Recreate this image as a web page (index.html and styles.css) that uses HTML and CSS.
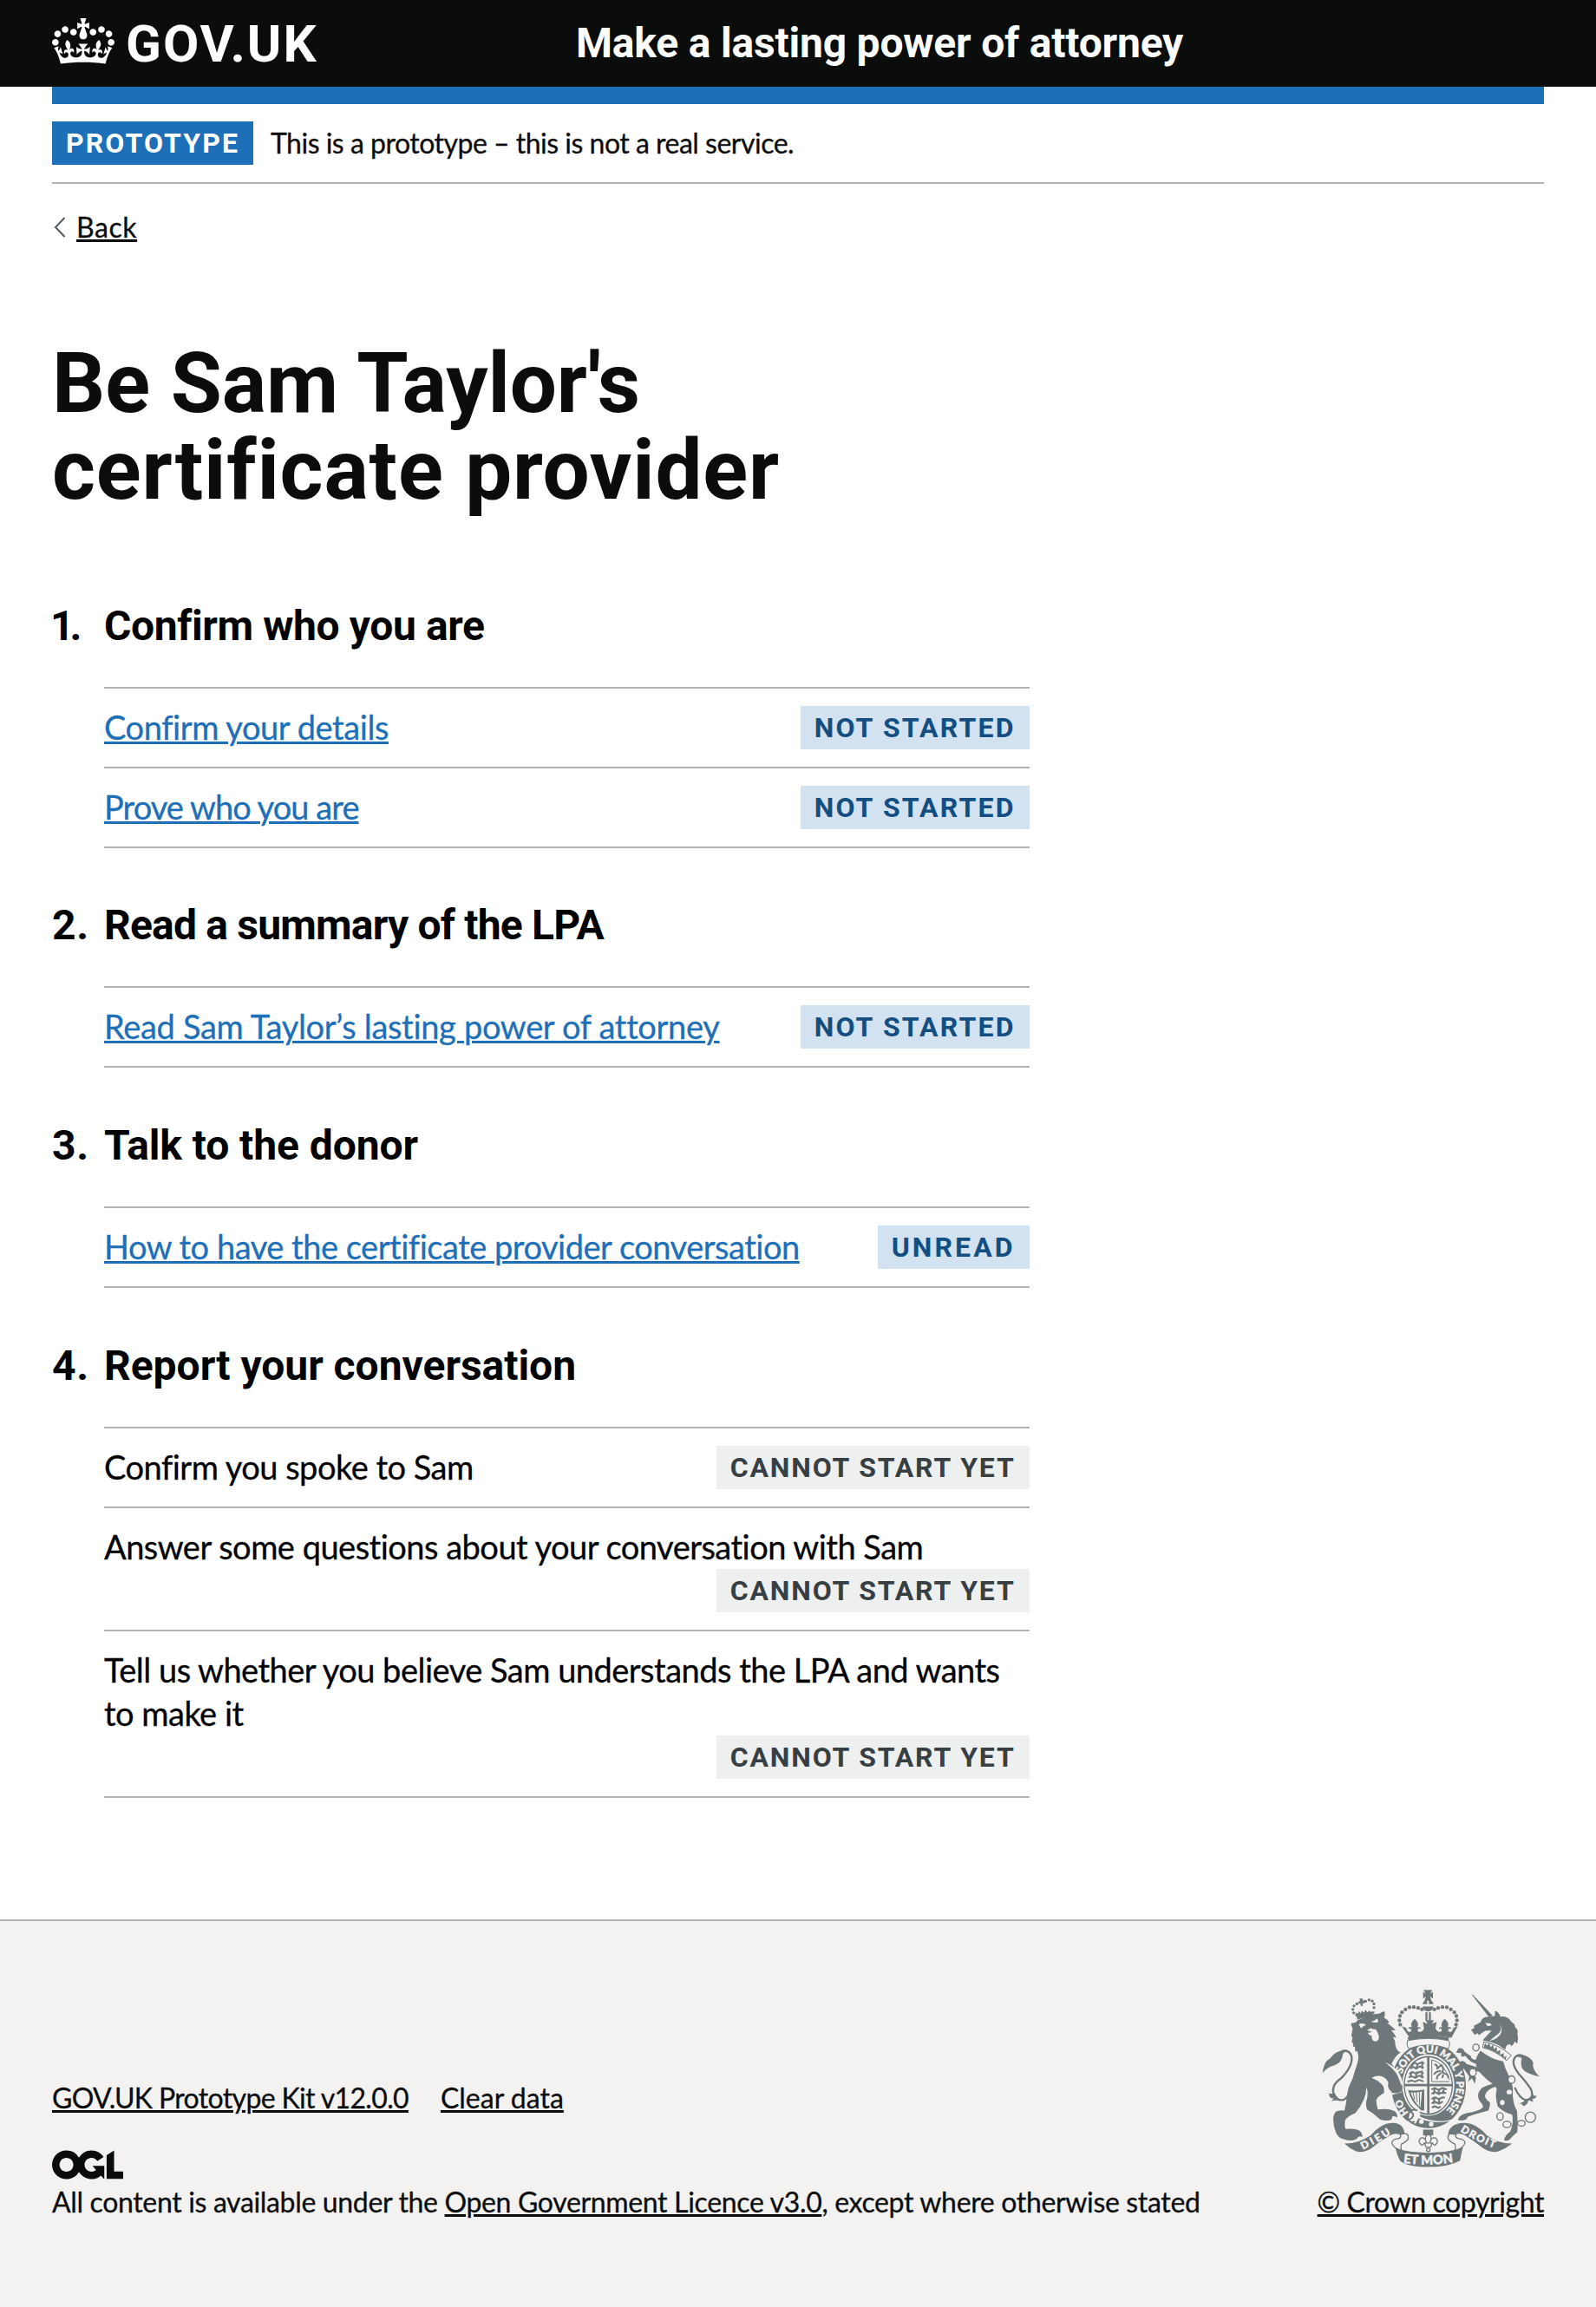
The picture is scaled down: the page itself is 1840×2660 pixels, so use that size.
FILE: index.html
```html
<!DOCTYPE html>
<html lang="en">
<head>
<meta charset="utf-8">
<title>Be Sam Taylor's certificate provider – Make a lasting power of attorney</title>
<link rel="stylesheet" href="styles.css">
</head>
<body>
<header class="header">
  <a class="logo" href="#">
    <svg class="logo-crown" viewBox="0 0 132 97" aria-hidden="true"><path fill="currentColor" fill-rule="evenodd" d="M25 30.2c3.5 1.5 7.7-.2 9.1-3.7 1.5-3.6-.2-7.8-3.9-9.2-3.6-1.4-7.6.3-9.1 3.9-1.4 3.5.3 7.5 3.9 9zM9 39.5c3.6 1.5 7.8-.2 9.2-3.7 1.5-3.6-.2-7.8-3.9-9.1-3.6-1.5-7.6.2-9.1 3.8-1.4 3.5.3 7.5 3.8 9zM4.4 57.2c3.5 1.5 7.7-.2 9.1-3.8 1.5-3.6-.2-7.7-3.9-9.1-3.5-1.5-7.6.3-9.1 3.8-1.4 3.5.3 7.6 3.9 9.1zm38.3-21.4c3.5 1.5 7.7-.2 9.1-3.8 1.5-3.6-.2-7.7-3.9-9.1-3.6-1.5-7.6.3-9.1 3.8-1.3 3.6.4 7.7 3.9 9.1zm64.4-5.6c-3.6 1.5-7.8-.2-9.1-3.7-1.5-3.6.2-7.8 3.8-9.2 3.6-1.4 7.7.3 9.2 3.9 1.3 3.5-.4 7.5-3.9 9zm15.9 9.3c-3.6 1.5-7.7-.2-9.1-3.7-1.5-3.6.2-7.8 3.7-9.1 3.6-1.5 7.7.2 9.2 3.8 1.5 3.5-.3 7.5-3.8 9zm4.7 17.7c-3.6 1.5-7.8-.2-9.2-3.8-1.5-3.6.2-7.7 3.9-9.1 3.6-1.5 7.7.3 9.2 3.8 1.3 3.5-.4 7.6-3.9 9.1zM89.3 35.8c-3.6 1.5-7.8-.2-9.2-3.8-1.4-3.6.2-7.7 3.9-9.1 3.6-1.5 7.7.3 9.2 3.8 1.4 3.6-.3 7.7-3.9 9.1zM69.7 17.7l8.9 4.7V9.3l-8.9 2.8c-.2-.3-.5-.6-.9-.9L72.4 0H59.6l3.5 11.2c-.3.3-.6.5-.9.9l-8.8-2.8v13.1l8.8-4.7c.3.3.6.7.9.9l-5 15.4v.1c-.2.8-.4 1.6-.4 2.4 0 4.1 3.1 7.5 7 8.1h.2c.3 0 .7.1 1 .1.4 0 .7 0 1-.1h.2c4-.6 7.1-4.1 7.1-8.1 0-.8-.1-1.7-.4-2.4V34l-5.1-15.4c.4-.2.7-.6 1-.9zM66 92.8c16.9 0 32.8 1.1 47.1 3.2 4-16.9 8.9-26.7 14-33.5l-9.6-3.4c1 4.9 1.1 7.2 0 10.2-1.5-1.4-3-4.3-4.2-8.7L108.6 76c2.8-2 5-3.2 7.5-3.3-4.4 9.4-10 11.9-13.6 11.2-4.3-.8-6.3-4.6-5.6-7.9 1-4.7 5.7-5.9 8-.5 4.3-8.7-3-11.4-7.6-8.8 7.1-7.2 7.9-13.5 2.1-21.1-8 6.1-8.1 12.3-4.5 20.8-4.7-5.4-12.1-2.5-9.5 6.2 3.4-5.2 7.9-2 7.2 3.1-.6 4.3-6.4 7.8-13.5 7.2-10.3-.9-10.9-8-11.2-13.8 2.5-.5 7.1 1.8 11 7.3L80.2 60c-4.1 4.4-8 5.3-12.3 5.4 1.4-4.4 8-11.6 8-11.6H55.5s6.4 7.2 7.9 11.6c-4.2-.1-8-1-12.3-5.4l1.4 16.4c3.9-5.5 8.5-7.7 10.9-7.3-.3 5.8-.9 12.8-11.1 13.8-7.2.6-12.9-2.9-13.5-7.2-.7-5 3.8-8.3 7.1-3.1 2.7-8.7-4.6-11.6-9.4-6.2 3.7-8.5 3.6-14.7-4.6-20.8-5.8 7.6-5 13.9 2.2 21.1-4.7-2.6-11.9.1-7.7 8.8 2.3-5.5 7.1-4.2 8.1.5.7 3.3-1.3 7.1-5.7 7.9-3.5.7-9-1.8-13.5-11.2 2.5.1 4.7 1.3 7.5 3.3l-4.7-15.4c-1.2 4.4-2.7 7.2-4.3 8.7-1.1-3-.9-5.3 0-10.2l-9.5 3.4c5 6.9 9.9 16.7 14 33.5 14.8-2.1 30.8-3.2 47.7-3.2z"/></svg>
    <span class="logo-text">GOV.UK</span>
  </a>
  <a class="service-name" href="#">Make a lasting power of attorney</a>
</header>

<div class="container">
  <div class="blue-bar"></div>
  <div class="phase-banner">
    <strong class="tag tag-phase">PROTOTYPE</strong>
    <span class="phase-text">This is a prototype – this is not a real service.</span>
  </div>
  <a class="back-link" href="#"><svg class="back-arrow" viewBox="0 0 14 24" aria-hidden="true"><path d="M12.500 1 2 12 12.500 23" fill="none" stroke="#505a5f" stroke-width="2"/></svg><span class="back-text">Back</span></a>

  <main class="main">
    <h1 class="title"><span class="title-first">Be Sam Taylor's</span> <span class="title-second">certificate provider</span></h1>
    <ol class="task-list">
      <li class="section">
        <h2 class="section-title s1"><span class="number number-one">1.</span>Confirm who you are</h2>
        <ul class="tasks">
          <li class="task"><a class="task-name n1" href="#">Confirm your details</a><strong class="tag tag-todo">NOT STARTED</strong></li>
          <li class="task"><a class="task-name n2" href="#">Prove who you are</a><strong class="tag tag-todo">NOT STARTED</strong></li>
        </ul>
      </li>
      <li class="section">
        <h2 class="section-title s2"><span class="number">2.</span>Read a summary of the LPA</h2>
        <ul class="tasks">
          <li class="task"><a class="task-name n3" href="#">Read Sam Taylor’s lasting power of attorney</a><strong class="tag tag-todo">NOT STARTED</strong></li>
        </ul>
      </li>
      <li class="section">
        <h2 class="section-title s3"><span class="number">3.</span>Talk to the donor</h2>
        <ul class="tasks">
          <li class="task"><a class="task-name n4" href="#">How to have the certificate provider conversation</a><strong class="tag tag-todo tag-unread">UNREAD</strong></li>
        </ul>
      </li>
      <li class="section">
        <h2 class="section-title s4"><span class="number">4.</span>Report your conversation</h2>
        <ul class="tasks">
          <li class="task"><span class="task-name n5">Confirm you spoke to Sam</span><strong class="tag tag-blocked">CANNOT START YET</strong></li>
          <li class="task"><span class="task-name n5">Answer some questions about your conversation with Sam</span><strong class="tag tag-blocked">CANNOT START YET</strong></li>
          <li class="task"><span class="task-name n5">Tell us whether you believe Sam understands the LPA and wants to make it</span><strong class="tag tag-blocked">CANNOT START YET</strong></li>
        </ul>
      </li>
    </ol>
  </main>
</div>

<footer class="footer">
  <div class="footer-content">
    <div class="footer-links"><a class="footer-link f1" href="#">GOV.UK Prototype Kit v12.0.0</a><a class="footer-link f2" href="#">Clear data</a></div>
    <svg class="ogl" viewBox="0 0 483.2 195.7" aria-hidden="true"><path fill="currentColor" d="M421.5 142.8V.1l-50.7 32.3v161.1h112.4v-50.7zm-122.3-9.6A47.12 47.12 0 0 1 221 97.8c0-26 21.1-47.1 47.1-47.1 16.7 0 31.4 8.7 39.7 21.8l42.7-27.2A97.63 97.63 0 0 0 268.1 0c-36.5 0-68.3 20.1-85.1 49.7A98 98 0 0 0 97.8 0C43.9 0 0 43.9 0 97.8s43.9 97.8 97.8 97.8c36.5 0 68.3-20.1 85.1-49.7a97.76 97.76 0 0 0 149.6 25.4l19.4 22.2h3v-87.8h-80l24.3 27.5zM97.8 145c-26 0-47.1-21.1-47.1-47.1s21.1-47.1 47.1-47.1 47.1 21.1 47.1 47.1S123.8 145 97.8 145"/></svg>
    <p class="licence">All content is available under the <a class="footer-link" href="#">Open Government Licence v3.0</a>, except where otherwise stated</p>
  </div>
  <a class="copyright" href="#">
    <svg class="crest" viewBox="100 74 753 614" aria-hidden="true">
      <defs>
        <path id="garter-top" d="M377 366A97 113 0 1 1 520 500"/>
        <path id="garter-left" d="M400 500C386 484 378 466 374 440"/>
        <path id="dieu" d="M242 628Q300 600 352 563"/>
        <path id="droit" d="M578 563Q630 597 708 627"/>
        <path id="mon" d="M381 673Q468 685 558 671"/>
      </defs>
      <g class="ink">
        <!-- royal crown -->
        <path d="M451 75h31l-7 12 9-5v22l-10-6 5 14h-24l5-14-10 6V82l9 5zM448 124q3-14 16-14v14zM470 110q14 0 16 14h-16zM448 132h38q-3 17-19 17t-19-17zM458 152h7v28h-7zM470 152h7v28h-7z"/>
        <g><circle cx="446" cy="142" r="6.500"/><circle cx="433" cy="137" r="6.500"/><circle cx="418" cy="134" r="6.500"/><circle cx="403" cy="135" r="6.500"/><circle cx="389" cy="142" r="6.500"/><circle cx="377" cy="152" r="6.500"/><circle cx="370" cy="165" r="6.500"/><circle cx="368" cy="180" r="6.500"/><circle cx="371" cy="195" r="6.500"/><circle cx="489" cy="142" r="6.500"/><circle cx="502" cy="137" r="6.500"/><circle cx="517" cy="134" r="6.500"/><circle cx="532" cy="135" r="6.500"/><circle cx="546" cy="142" r="6.500"/><circle cx="558" cy="152" r="6.500"/><circle cx="565" cy="165" r="6.500"/><circle cx="567" cy="180" r="6.500"/><circle cx="564" cy="195" r="6.500"/></g>
        <path d="M376 200l16 6q2 14 12 14 9-2 3-10-5-5-8 1 0-12 12-7-7-15 10-29 17 15 9 29 13-4 11 8-4-8-9-1-3 10 8 9 10-2 13-13l-4-22 17 7-8-13h30l-8 13 17-7-4 22q4 11 13 13 10 1 8-9-5-7-9 1-2-12 11-8-8-14 9-29 17 14 10 29 12-5 12 7-3-6-8-1-6 8 3 10 10 0 12-14l16-6-22 40q-72-14-145 0z"/>
        <path d="M396 239q72-16 144 0l-3 11q-70-14-138 0z"/>
        <!-- garter -->
        <path fill-rule="evenodd" d="M469 258C545 258 598 325 598 405S545 553 469 553 340 485 340 405 393 258 469 258zm-1 40c-52 0-90 47-90 106s38 106 90 106 90-47 90-106-38-106-90-106z"/>
        <path fill-rule="evenodd" d="M468 303c47 0 85 43 85 101s-38 103-85 103-85-45-85-103 38-101 85-101zm-4 5c-41 3-74 37-77 92h77zm8 0v92h77c-3-53-34-89-77-92zm-85 100c2 55 35 90 77 94v-94zm85 0v94c42-4 75-39 77-94z"/>
        <!-- quarters -->
        <g fill="none" stroke="#6e777a" stroke-width="6" stroke-linejoin="round"><path d="M411 335l10-9 10 6 12-6 11 2M404 346l10-6 12 7 13-8 13 6M402 365l11-7 13 7 12-7 14 5M400 378l9-5 14 6 14-8 15 7M396 392l14-4 12 4 14-6 16 5M415 330l-6 18M431 328l-4 22M447 322v25M411 357l-6 20M429 357l-5 22M446 354v26"/><path d="M479 419l12-5 12 7 14-7 15 5M479 434l12-6 14 7 13-7 12 4M479 452l13-6 12 7 14-7 7 2M479 467l12-5 14 6 13-7M480 482l10-5 13 6 8-5M491 414l-5 22M506 416l-3 20M522 415l-3 20M490 447l-4 22M507 448l-4 22"/><path stroke-width="3" d="M480 316v76h61M480 316q43 10 61 70"/><path d="M489 333q12-2 10 14l14-13q12 14 2 25l12 6q14 5 8 14M511 355l-14 3-10 9M512 362l-12 10-3 12M520 367l-4 12"/></g>
        <path d="M398 420q15 6 56-1v73q-14 1-19-10-26-19-37-62zm9 9q12 35 34 52l5-55q-23 6-39 3z"/>
        <path d="M415 429l6 25M426 429l4 34M437 428l1 46" stroke="#6e777a" stroke-width="3"/>
        <path d="M450 558h35v20h-35z"/>
      </g>
      <!-- band under the crown -->
      <path d="M396 250q73-15 142 0 8 10-1 28-67-26-137 0-10-14-4-28z" fill="#f3f2f1" stroke="#6e777a" stroke-width="3"/>
      <!-- buckle and studs -->
      <g fill="#f3f2f1"><path d="M404 500l8-12 25 4 3 17-16 28-27-4zM434 510q60 30 118 12l-4 5q-60 14-115-9zM378 420l-36 12v6l33-9z"/><circle cx="444" cy="530" r="8"/><circle cx="478" cy="539" r="8"/></g>
      <path d="M430 492q-15-8-24 5 12 4 9 14-3 10-16 12 8 14 22 7" fill="none" stroke="#6e777a" stroke-width="6"/>
      <g class="motto"><text font-size="36"><textPath href="#garter-top" textLength="388" lengthAdjust="spacing">SOIT QUI MAL Y PENSE</textPath></text><text font-size="34"><textPath href="#garter-left">HO</textPath></text></g>
      <!-- lion -->
      <g class="ink">
        <path d="M222 168l-5-15 9 4 1-9 8 8 3-10 8 8 5-11 7 10 6-8 3 11 10-5-1 13q-29 4-54 14z"/>
        <path d="M219 166q30-17 63-17l-1 8q-31 3-58 16zM230 104l12 1-2 7 8-2-1 12-7-3 2 11h-8l-1-9-7 2v-9l6 1z"/>
        <g><circle cx="220" cy="161" r="5"/><circle cx="210" cy="154" r="5"/><circle cx="207" cy="142" r="5"/><circle cx="211" cy="130" r="5"/><circle cx="221" cy="123" r="5"/><circle cx="251" cy="114" r="5"/><circle cx="263" cy="109" r="5"/><circle cx="274" cy="113" r="5"/><circle cx="280" cy="123" r="5"/><circle cx="280" cy="136" r="5"/></g>
        <path d="M201 190Q219 190 223 180Q265 158 301 156Q307 149 317 149Q320 160 315 171Q329 178 333 188L326 189Q342 201 354 213Q346 216 339 213Q350 225 358 240L346 238Q355 254 354 266Q358 285 372 291Q355 300 341 330Q369 365 374 400L376 425Q364 434 348 431Q340 428 334 420Q326 410 330 395Q322 375 298 372Q282 372 272 379Q292 386 308 402Q318 414 314 432Q296 440 288 455Q290 480 294 488Q330 484 352 494Q364 506 360 516Q350 508 342 514Q346 520 338 524Q318 530 300 522Q278 500 256 488Q250 470 255 455Q262 430 254 412Q254 455 216 500Q192 510 182 522Q176 538 182 556Q210 552 228 560Q240 568 240 584Q228 576 220 590Q200 600 178 592Q154 586 148 566Q140 548 140 530Q136 512 148 496Q158 490 178 492Q184 470 186 445Q190 410 205 385L222 330Q228 312 226 300L222 285Q214 296 214 270Q206 276 208 258Q200 260 206 240Q200 238 204 222Q206 212 206 206Q200 200 201 190z"/>
      </g>
      <g fill="#f3f2f1"><path d="M228 192q14-5 25 4-13 4-17 12-6-6-8-16zM270 184q12-1 20-10 7 5 4 12-11 4-24-2zM253 211q9 4 16-5 8 6 17 4 8 11 11 24 2 17-12 19-14-2-13-20-11-1-13-10 10 0 14-4-10 0-20-8zM318 325q30 22 44 46l13 34 4-3q-3-54-61-77z"/></g>
      <path d="M207 400q-10 42-30 54-24 7-34-13-15-35 23-60 44-46 36-79-9-21-33-16" fill="none" stroke="#6e777a" stroke-width="7"/>
      <path class="ink" d="M188 282q-43 2-60 30-21 9-26 50 18-22 42-27 25-7 29-40zM117 430q14 7 26 1 12 20 24 23l-34 5 8-8q-18-3-16-17z"/>
      <!-- unicorn -->
      <g class="ink">
        <path d="M617 89l6 3 68 72-14 4zM677 168l21-3 1-18q14 5 18 20 28-2 37 17 16 10 14 19 13 11 8 22 5 17 0 34-4 2-9-6-4 13-13 16-2-9-10-5-8 1-10 21-20-27-78-36l31-34-22 1q-13 7-22 16l-4-8-10 6-13-18 11-5-1-8 23-13q4-18 26-19z"/>
        <path d="M648 285Q690 317 727 322Q733 348 747 372Q764 405 760 440Q762 470 775 494Q778 540 776 566Q758 580 750 592Q740 600 730 594Q734 576 752 564Q764 530 758 506Q730 500 708 478Q698 440 704 424Q706 410 698 410Q670 418 664 440Q664 452 680 462Q684 470 676 492Q630 504 604 514Q602 528 578 526Q568 526 572 520Q580 504 604 500Q640 494 656 482Q660 474 648 462Q636 446 642 430Q650 408 690 400Q650 370 636 345Q628 320 636 305z"/>
        <path d="M651 300q-7-1-13 17-21 1-23-13-11-8-21-15-5-15-21-13l-9 15q11 3 19 2-4 9 2 13l11-3q8 10 20 20 22 14 45 4zM647 346q-22-8-47-15-5-11-17-11-5 5-10 3 6 8 9 14l-8 3q5 9 17 7 10 15 19 27-1 10-6 20l15-14 10 20 4-23q-14-11-22-28l38 10z"/>
      </g>
      <g fill="#f3f2f1"><path d="M655 250q56 8 105 51l-20 22q-41-40-87-46zM665 188l19 3 3 6-14 3zM712 192q16 22-4 36-14 11-29 23 22-2 38-22 11-19-5-37z"/><ellipse cx="748" cy="428" rx="9" ry="8"/><ellipse cx="724" cy="464" rx="8" ry="9"/></g>
      <path d="M660 254q50 9 95 47l-16 18q-38-34-83-45z" fill="none" stroke="#6e777a" stroke-width="3"/>
      <path class="ink" d="M661 270l3-12 7 10 8-10 4 15 10-9 1 16 11-8v17l12-7-1 17 12-6 2 15 8-6-2 14q-36-32-76-42z"/>
      <g fill="#f3f2f1" stroke="#6e777a" stroke-width="4"><ellipse cx="633" cy="274" rx="11" ry="12"/><ellipse cx="622" cy="360" rx="12" ry="13"/><ellipse cx="756" cy="385" rx="12" ry="13"/><ellipse cx="716" cy="512" rx="11" ry="13"/><ellipse cx="740" cy="540" rx="14" ry="11"/><ellipse cx="790" cy="536" rx="13" ry="10"/><circle cx="821" cy="515" r="18"/></g>
      <path d="M767 412q16 38 39 44 30-5 17-38-13-21-42-53-31-40-10-60 13-11 32 2" fill="none" stroke="#6e777a" stroke-width="7"/>
      <path class="ink" d="M774 305q39-12 57 21-6 21 21 49-33-8-52-20-16-13-9-45zM828 432q2 11 15 9-5 12-15 10l3 11-17-6q-2 17-18 21-4-13-22-9 24-2 31-15 21-4 23-21z"/>
      <!-- ribbon and scroll -->
      <g fill="#f3f2f1" stroke="#6e777a" stroke-width="4"><path d="M371 575q28-10 28 10 0 12-24 23-5 13 3 26-35-14-36-31 2-12 22-14 12-3 7-14zM564 575q-28-10-28 10 0 12 24 23 5 13-3 26 35-14 38-31-2-12-22-14-14-3-9-14z"/></g>
      <path class="ink" d="M178 606q47 1 90-28 42-48 80-43 34 1 38 37l-16 4q-16-8-32 1-37 20-68 46-26 16-50 11-24-10-42-28zM758 606q-47 1-87-28-42-48-82-43-44 1-53 37l22 4q20-8 35 1 32 20 66 46 26 16 50 11 27-10 49-28zM353 617q16 17 114 21 94-4 121-21-7 28-10 48-38 22-111 22-73 0-97-22-11-22-17-48z"/>
      <g class="motto"><text font-size="36"><textPath href="#dieu" textLength="112">DIEU</textPath></text><text font-size="36"><textPath href="#droit" textLength="132">DROIT</textPath></text><text font-size="44"><textPath href="#mon" textLength="174">ET MON</textPath></text></g>
      <g fill="none" stroke="#6e777a" stroke-width="4"><path d="M468 569q-16 15-7 32-4-18-19-14-14 12 4 25 5 0 8-8h28q3 8 9 8 16-13 3-25-15-4-20 14 10-17-6-32zM456 604q2 15 7 15h10q6 0 7-15"/><circle cx="468" cy="628" r="6"/></g>
    </svg>
    <span class="copyright-text">© Crown copyright</span>
  </a>
</footer>
</body>
</html>
```
FILE: styles.css
```css
* { box-sizing: border-box; }
body {
  margin: 0;
  background: #fff;
  color: #0b0c0c;
  font: 400 32px/40px Lato, "Liberation Sans", sans-serif;
  font-variant-ligatures: none;
}
a { color: inherit; text-decoration-thickness: 3px; text-underline-offset: 2px; }
h1, h2, ol, ul, p { margin: 0; padding: 0; }
ol, ul { list-style: none; }
h1, h2, .tag, .logo-text, .service-name { font-family: Roboto, "Liberation Sans", sans-serif; font-weight: 700; }

.header { display: grid; grid-template-columns: 604px 1fr; height: 100px; padding: 0 60px; background: #0b0c0c; color: #fff; }
.header a { text-decoration: none; }
.logo { display: flex; align-items: flex-start; gap: 13px; padding-top: 21px; }
.logo-crown { width: 72px; height: 53px; }
.logo-text { font-size: 60px; line-height: 60px; letter-spacing: 2px; }
.service-name { font-size: 48px; line-height: 50px; padding-top: 25px; letter-spacing: -.2px; }

.container { padding: 0 60px; }
.blue-bar { height: 20px; background: #1d70b8; }
.phase-banner { display: flex; align-items: center; gap: 20px; padding: 20px 0; border-bottom: 2px solid #b1b4b6; }
.phase-text, .task-name, .back-text, .footer-content, .copyright-text { -webkit-text-stroke: .3px currentColor; }
.phase-text { letter-spacing: -.5px; }
.tag { display: block; height: 50px; padding: 5px 16px; font-size: 32px; line-height: 40px; letter-spacing: 2.17px; white-space: nowrap; }
.tag-phase { color: #fff; background: #1d70b8; letter-spacing: 2.1px; }
.tag-todo { color: #144e81; background: #d2e2f1; margin-left: auto; }
.tag-unread { letter-spacing: 3.09px; }
.tag-blocked { color: #383f43; background: #eeefef; letter-spacing: 1.85px; margin-left: auto; }

.back-link { display: flex; width: max-content; margin-top: 30px; text-decoration: none; }
.back-arrow { width: 14px; height: 24px; margin: 8px 12px 0 2px; }
.back-text { text-decoration: underline; text-decoration-thickness: 3px; letter-spacing: .55px; }

.main { width: 1126.67px; padding-top: 110px; }
.title { font-size: 96px; line-height: 100px; margin-bottom: 104.67px; }
.title span { display: block; }
.title-first { letter-spacing: -.1px; }
.title-second { letter-spacing: .8px; }
.task-list { display: grid; gap: 64.67px; color: #000; }
.section-title { display: grid; grid-template-columns: 60px 1fr; font-size: 48px; line-height: 50px; margin-bottom: 45px; }
.number { letter-spacing: .8px; }
.number-one { letter-spacing: -5px; margin-left: -2px; }
.s1 { letter-spacing: -.39px; }
.s2 { letter-spacing: -.8px; }
.s3 { letter-spacing: -.09px; }
.s4 { letter-spacing: -.03px; }
.tasks { margin-left: 60px; border-top: 2px solid #b1b4b6; }
.task { display: flex; flex-wrap: wrap; padding: 20px 0; border-bottom: 2px solid #b1b4b6; }
.task-name { margin: -1px 0 1px; font-size: 38px; line-height: 50px; }
a.task-name { color: #1d70b8; }
.n1 { letter-spacing: -.43px; }
.n2 { letter-spacing: -.94px; }
.n3 { letter-spacing: -.32px; }
.n4 { letter-spacing: -.48px; }
.n5 { letter-spacing: -.51px; }

.footer { display: flex; justify-content: space-between; align-items: flex-end; height: 447px; margin-top: 140px; padding: 0 60px 101px; border-top: 2px solid #b1b4b6; background: #f3f2f1; }
.footer-content { display: flex; flex-direction: column; }
.footer-links { display: flex; gap: 37px; margin-bottom: 40px; }
.f1 { letter-spacing: -.65px; }
.ogl { width: 82px; height: 34px; margin-bottom: 6px; }
.licence { letter-spacing: -.34px; }
.copyright { display: flex; flex-direction: column; align-items: center; letter-spacing: -.41px; }
.crest { width: 251px; height: 205px; margin-bottom: 20px; }
.ink { fill: #6e777a; }
.motto { fill: #f3f2f1; stroke: #f3f2f1; stroke-width: 1.2; font-family: Lato, sans-serif; font-weight: 900; letter-spacing: 0; }
```
